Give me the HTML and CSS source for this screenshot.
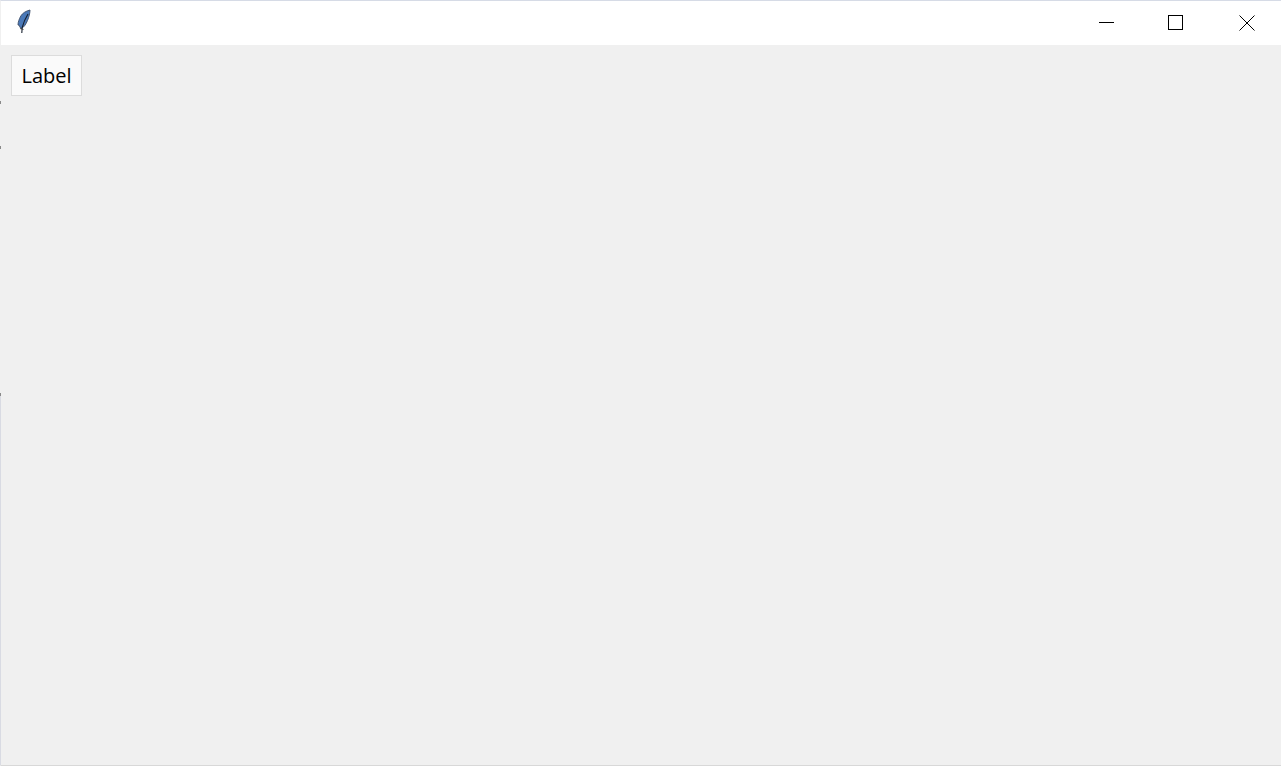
FILE: index.html
```html
<!DOCTYPE html>
<html lang="en">
<head>
<meta charset="utf-8">
<title>tk</title>
<link rel="stylesheet" href="styles.css">
</head>
<body>
<div class="window">
  <header class="titlebar">
    <svg class="app-icon" width="16" height="26" viewBox="0 0 16 26" aria-hidden="true">
      <path d="M13 1 C9 2 5.5 4 3.8 7 C2.2 10 1 13 1 16 L2.5 16.5 L2.8 18 L4.2 19.5 C7 18.5 9 15 10.5 11.5 C12 8 13 4 13 1 Z" fill="#4a79b8" stroke="#3c4d68" stroke-width="0.9"/>
      <path d="M4.8 24 L5.2 18.5 C6.5 13.5 8.5 9 11 5" stroke="#16202f" stroke-width="1.1" fill="none"/>
      <path d="M3 19.5 L6.5 20.5" stroke="#333" stroke-width="0.8" fill="none"/>
    </svg>
    <div class="controls">
      <div class="control">
        <svg width="16" height="16" viewBox="-1 0 16 16" aria-hidden="true"><path d="M0 7.5H15" stroke="#000" stroke-width="1"/></svg>
      </div>
      <div class="control">
        <svg width="16" height="16" viewBox="0 0 16 16" aria-hidden="true"><rect x="0.5" y="0.5" width="14" height="14" fill="none" stroke="#000" stroke-width="1"/></svg>
      </div>
      <div class="control">
        <svg width="16" height="16" viewBox="-1 0 16 16" aria-hidden="true"><path d="M0.5 0.5L15.5 15.5M15.5 0.5L0.5 15.5" stroke="#000" stroke-width="1"/></svg>
      </div>
    </div>
  </header>
  <main class="content">
    <div class="label">Label</div>
  </main>
  <span class="edge"></span>
  <span class="mark mark-a"></span>
  <span class="mark mark-b"></span>
  <span class="mark mark-c"></span>
</div>
</body>
</html>
```
FILE: styles.css
```css
html, body {
  margin: 0;
  padding: 0;
  height: 100%;
  overflow: hidden;
}

.window {
  position: relative;
  box-sizing: border-box;
  width: 1281px;
  height: 766px;
  display: flex;
  flex-direction: column;
  background: #f0f0f0;
  border-top: 1px solid #d6dbe6;
  border-left: 1px solid #f0f0f0;
  border-bottom: 1px solid #d8d8d8;
}

.titlebar {
  height: 44px;
  flex: none;
  display: flex;
  align-items: center;
  justify-content: space-between;
  background: #ffffff;
}

.app-icon {
  margin-left: 16px;
  margin-top: -2px;
}

.controls {
  display: flex;
}

.control {
  width: 70px;
  height: 44px;
  display: flex;
  align-items: center;
  justify-content: center;
}

.control svg {
  display: block;
  overflow: visible;
}

.content {
  flex: 1;
  padding: 10px;
}

.label {
  box-sizing: border-box;
  width: 71px;
  height: 41px;
  display: flex;
  align-items: center;
  justify-content: center;
  background: #fafafa;
  border: 1px solid #dcdcdc;
  font-family: "Open Sans", "Noto Sans", sans-serif;
  font-size: 20px;
  color: #000;
}

.edge {
  position: absolute;
  left: -1px;
  top: 394px;
  bottom: 0;
  width: 1px;
  background: #d9dbe3;
}

.mark {
  position: absolute;
  left: -1px;
  width: 1px;
  height: 3px;
  background: #8a8a8a;
}

.mark-a { top: 100px; }
.mark-b { top: 145px; }
.mark-c { top: 392px; }
```
